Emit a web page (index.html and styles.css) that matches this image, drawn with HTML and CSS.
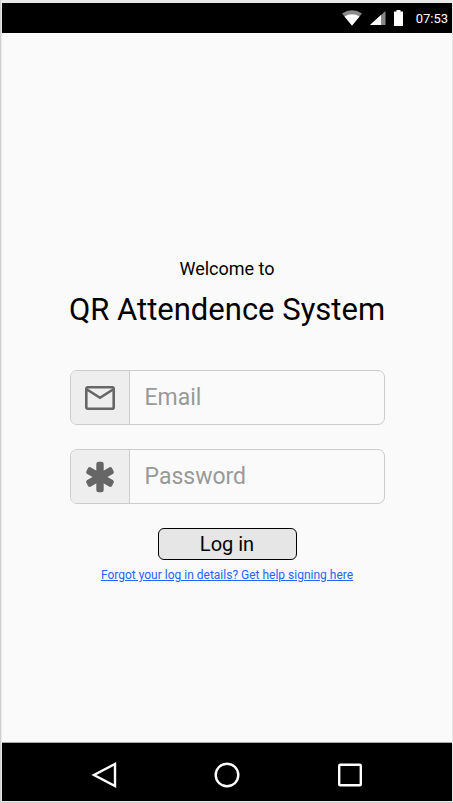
FILE: index.html
```html
<!DOCTYPE html>
<html lang="en">
<head>
<meta charset="utf-8">
<meta name="viewport" content="width=device-width, initial-scale=1">
<title>QR Attendence System</title>
<link rel="stylesheet" href="styles.css">
</head>
<body>
<div class="screen">
  <header class="status">
    <div class="status-icons">
      <svg width="20" height="16" viewBox="0 0 20 16" aria-hidden="true"><path d="M0 3.500Q10-3 20 3.500L10 15.500z" fill="#8a8a8a"/><path d="M2.500 6.500Q10 2 17.500 6.500L10 15.500z" fill="#fff"/></svg>
      <svg width="16" height="14" viewBox="0 0 16 14" aria-hidden="true"><path d="M15.500 0v14H0z" fill="#888"/><path d="M11 4.100V14H0z" fill="#fff"/></svg>
      <svg width="9" height="16" viewBox="0 0 9 16" aria-hidden="true"><path d="M2.500 0h4v1.500H9V16H0V1.500h2.500z" fill="#fff"/></svg>
    </div>
    <time class="clock">07:53</time>
  </header>
  <main class="content">
    <form class="login">
      <p class="welcome">Welcome to</p>
      <h1 class="title">QR Attendence System</h1>
      <div class="field">
        <label class="field-icon" for="email" aria-label="Email">
          <svg width="32" height="26" viewBox="0 0 32 26" fill="none" stroke="#666" stroke-width="2.600" aria-hidden="true"><rect x="2.300" y="2.300" width="27.400" height="21.400" rx="1.500"/><path d="M3 4.500l13 8.300 13-8.300"/></svg>
        </label>
        <input class="field-input" id="email" type="email" placeholder="Email">
      </div>
      <div class="field">
        <label class="field-icon" for="password" aria-label="Password">
          <svg width="30" height="32" viewBox="0 0 30 32" fill="#666" aria-hidden="true"><g transform="translate(15 16)"><rect x="-3.700" y="-15.200" width="7.400" height="30.400" rx="2.200"/><rect x="-3.700" y="-14.800" width="7.400" height="29.600" rx="2.200" transform="rotate(60)"/><rect x="-3.700" y="-14.800" width="7.400" height="29.600" rx="2.200" transform="rotate(-60)"/></g></svg>
        </label>
        <input class="field-input" id="password" type="password" placeholder="Password">
      </div>
      <button class="submit" type="submit">Log in</button>
      <a class="help" href="#">Forgot your log in details? Get help signing here</a>
    </form>
  </main>
  <nav class="navbar">
    <button class="nav-button" type="button" aria-label="Back"><svg width="26" height="28" viewBox="0 0 26 28" fill="none" stroke="#fff" stroke-width="2.400" aria-hidden="true"><path d="M24 3v22L3 14z"/></svg></button>
    <button class="nav-button" type="button" aria-label="Home"><svg width="26" height="26" viewBox="0 0 26 26" fill="none" stroke="#fff" stroke-width="2.400" aria-hidden="true"><circle cx="13" cy="13" r="11.300"/></svg></button>
    <button class="nav-button" type="button" aria-label="Recent apps"><svg width="26" height="26" viewBox="0 0 26 26" fill="none" stroke="#fff" stroke-width="2.400" aria-hidden="true"><rect x="2.200" y="2.700" width="21.600" height="20.600" rx="1"/></svg></button>
  </nav>
</div>
</body>
</html>
```
FILE: styles.css
```css
* {
  box-sizing: border-box;
}

body {
  margin: 0;
  background: #e8e8e8;
  color: #000;
  font-family: Roboto, "Liberation Sans", sans-serif;
}

.screen {
  display: flex;
  flex-direction: column;
  min-height: 100vh;
  padding: 3px 1px 1px 1px;
  border-left: 1px solid #d0d0d0;
  border-bottom: 1px solid #d0d0d0;
}

.status {
  display: flex;
  align-items: center;
  justify-content: flex-end;
  gap: 13px;
  height: 30px;
  padding-right: 4px;
  background: #000;
}

.status-icons {
  display: flex;
  align-items: center;
  gap: 8px;
}

.clock {
  color: #fff;
  font-size: 13px;
  font-weight: 400;
}

.content {
  display: flex;
  flex: 1;
  flex-direction: column;
  justify-content: center;
  align-items: center;
  padding-top: 66px;
  background: #fafafa;
}

.login {
  display: flex;
  flex-direction: column;
  align-items: center;
  width: 70%;
}

.welcome {
  margin: 0;
  font-size: 18px;
  line-height: 22px;
}

.title {
  margin: 9px 0 39px;
  font-size: 31px;
  font-weight: 400;
  line-height: 42px;
  white-space: nowrap;
}

.field {
  display: flex;
  width: 100%;
  height: 55px;
  margin-bottom: 24px;
  overflow: hidden;
  border: 1px solid #ccc;
  border-radius: 7px;
}

.field-icon {
  display: flex;
  flex: none;
  align-items: center;
  justify-content: center;
  width: 59px;
  border-right: 1px solid #ccc;
  background: #eee;
}

.field-input {
  flex: 1;
  min-width: 0;
  padding: 0 15px;
  border: 0;
  outline: 0;
  background: transparent;
  color: #000;
  font-family: inherit;
  font-size: 23px;
}

.field-input::placeholder {
  color: #999;
}

.submit {
  width: 139px;
  height: 32px;
  padding: 0;
  border: 1px solid #000;
  border-radius: 6px;
  background: #e6e6e6;
  color: #000;
  font-family: inherit;
  font-size: 20px;
  line-height: 28px;
}

.help {
  margin-top: 7px;
  color: #2962ff;
  font-size: 12px;
  line-height: 16px;
  white-space: nowrap;
}

.navbar {
  display: flex;
  align-items: center;
  justify-content: center;
  gap: 97px;
  height: 59px;
  padding-top: 6px;
  border-top: 1px solid #aaa;
  background: #000;
}

.nav-button {
  display: flex;
  padding: 0;
  border: 0;
  background: none;
}
```
